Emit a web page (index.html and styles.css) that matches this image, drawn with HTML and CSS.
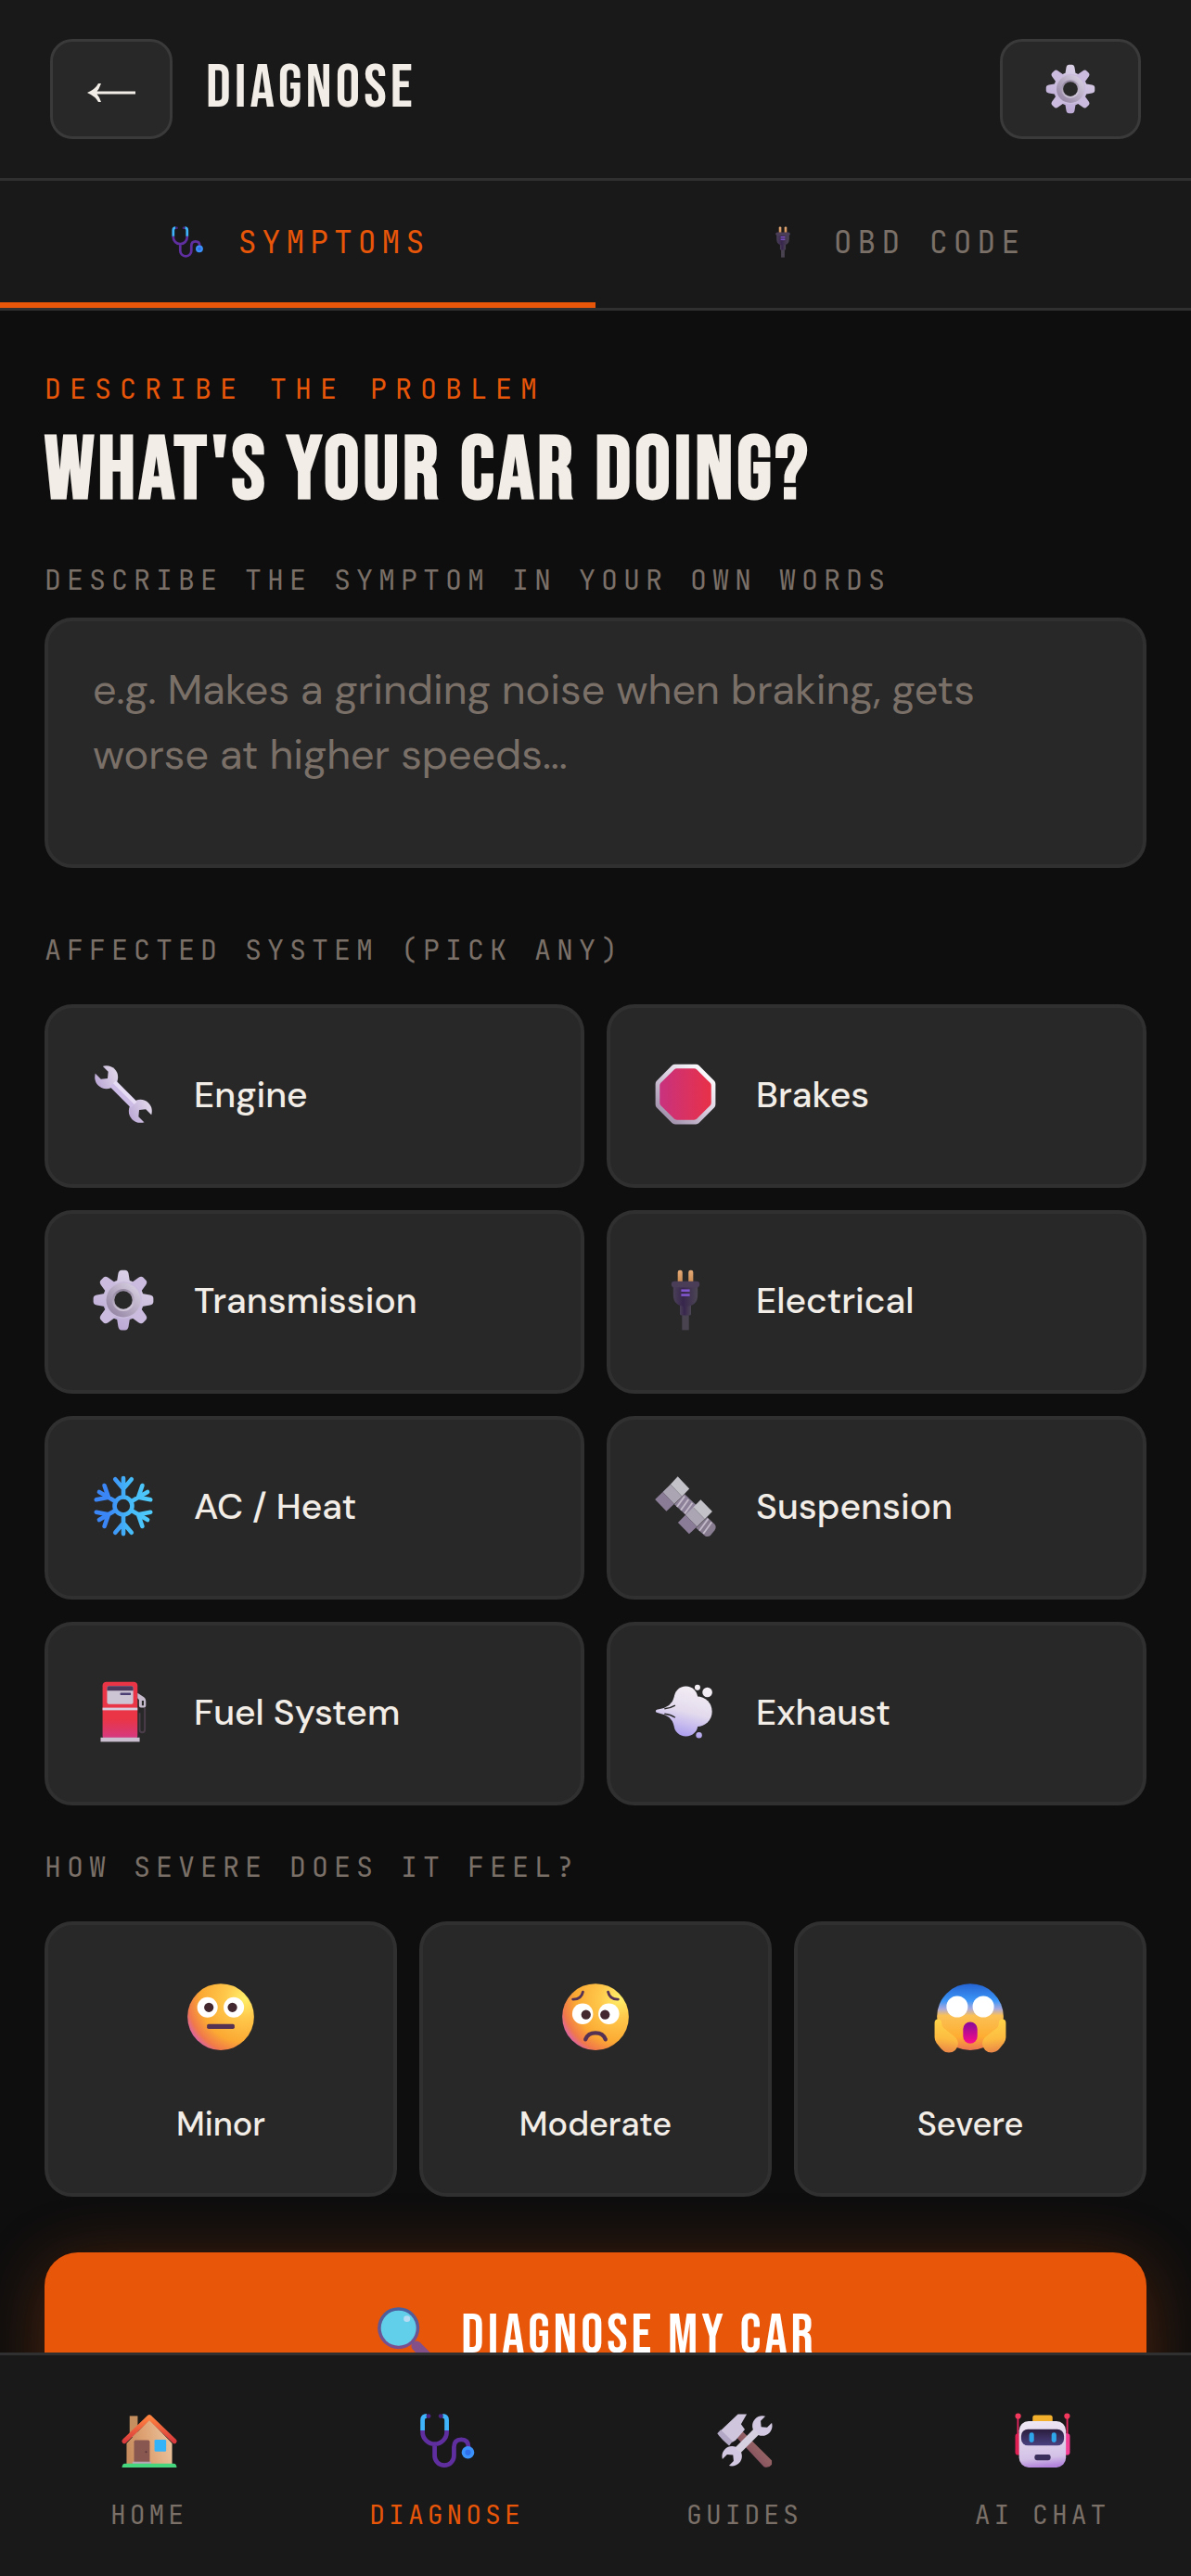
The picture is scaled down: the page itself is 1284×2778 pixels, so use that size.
FILE: index.html
```html
<!DOCTYPE html>
<html lang="en">
  <head>
    <meta charset="UTF-8" />
    <title>Diagnose</title>
    <meta name="viewport" content="width=device-width, initial-scale=1.0" />
    <link rel="stylesheet" href="styles.css">
  </head>
  <body>
    <!-- shared icon shapes and gradients -->
    <svg class="sprite" aria-hidden="true">
      <defs>
        <linearGradient id="metal" x1="0.7" y1="0" x2="0.3" y2="1">
          <stop offset="0" stop-color="#e2d9ea" />
          <stop offset="1" stop-color="#bba7d6" />
        </linearGradient>
        <linearGradient id="metalFlat" gradientUnits="userSpaceOnUse" x1="22" y1="2" x2="10" y2="30">
          <stop offset="0" stop-color="#ddd4e8" />
          <stop offset="1" stop-color="#b9a6d4" />
        </linearGradient>
        <linearGradient id="ring" x1="1" y1="0" x2="0.1" y2="0.9">
          <stop offset="0" stop-color="#e0d8e8" />
          <stop offset="1" stop-color="#9384a3" />
        </linearGradient>
        <linearGradient id="ringInner" x1="0" y1="0" x2="0.3" y2="1">
          <stop offset="0" stop-color="#8b7e98" />
          <stop offset="1" stop-color="#cfc5d8" />
        </linearGradient>
        <linearGradient id="plugBody" x1="0" y1="0" x2="1" y2="0">
          <stop offset="0" stop-color="#4a4057" />
          <stop offset="0.4" stop-color="#38264d" />
          <stop offset="1" stop-color="#4c4654" />
        </linearGradient>
        <linearGradient id="prong" x1="0" y1="0" x2="0" y2="1">
          <stop offset="0" stop-color="#e7ab78" />
          <stop offset="1" stop-color="#c98a4f" />
        </linearGradient>
        <linearGradient id="ice" gradientUnits="userSpaceOnUse" x1="4" y1="0" x2="28" y2="0">
          <stop offset="0.2" stop-color="#3b86f7" />
          <stop offset="0.6" stop-color="#45b9f8" />
          <stop offset="1" stop-color="#4fcbfb" />
        </linearGradient>
        <linearGradient id="signRim" x1="0.9" y1="0.1" x2="0.2" y2="0.9">
          <stop offset="0" stop-color="#ffffff" />
          <stop offset="0.5" stop-color="#d9cfe0" />
          <stop offset="1" stop-color="#a394ae" />
        </linearGradient>
        <linearGradient id="signFace" x1="0" y1="0" x2="1" y2="0">
          <stop offset="0" stop-color="#c8327e" />
          <stop offset="1" stop-color="#e83148" />
        </linearGradient>
        <linearGradient id="pump" x1="0" y1="0" x2="0" y2="1">
          <stop offset="0.65" stop-color="#e93546" />
          <stop offset="1" stop-color="#d33a86" />
        </linearGradient>
        <linearGradient id="smoke" gradientUnits="userSpaceOnUse" x1="20" y1="4" x2="14" y2="28">
          <stop offset="0" stop-color="#f4eef5" />
          <stop offset="0.5" stop-color="#e3dbed" />
          <stop offset="1" stop-color="#a99aef" />
        </linearGradient>
        <radialGradient id="face" cx="0.86" cy="0.22" r="0.95">
          <stop offset="0" stop-color="#fff06a" />
          <stop offset="0.3" stop-color="#ffc94c" />
          <stop offset="0.7" stop-color="#fba933" />
          <stop offset="0.9" stop-color="#f0794a" />
          <stop offset="1" stop-color="#dd659c" />
        </radialGradient>
        <linearGradient id="fright" x1="0" y1="0" x2="0" y2="1">
          <stop offset="0" stop-color="#2463d2" />
          <stop offset="0.26" stop-color="#3d97f8" />
          <stop offset="0.38" stop-color="#a9a9dc" />
          <stop offset="0.48" stop-color="#fbc155" />
          <stop offset="0.8" stop-color="#fdad31" />
          <stop offset="1" stop-color="#ec7452" />
        </linearGradient>
        <linearGradient id="scream" x1="0" y1="0" x2="0" y2="1">
          <stop offset="0" stop-color="#850a9b" />
          <stop offset="1" stop-color="#fb0c88" />
        </linearGradient>
        <linearGradient id="hand" x1="0.6" y1="0" x2="0.5" y2="1">
          <stop offset="0" stop-color="#ffd54a" />
          <stop offset="0.6" stop-color="#fcbb40" />
          <stop offset="1" stop-color="#ea8648" />
        </linearGradient>
        <linearGradient id="roof" x1="0" y1="0" x2="0" y2="1">
          <stop offset="0" stop-color="#ff8440" />
          <stop offset="1" stop-color="#da3a3c" />
        </linearGradient>
        <linearGradient id="wall" x1="0" y1="0.5" x2="1" y2="0.3">
          <stop offset="0" stop-color="#c78d5e" />
          <stop offset="0.4" stop-color="#dea273" />
          <stop offset="1" stop-color="#eac5a0" />
        </linearGradient>
        <linearGradient id="robotHead" x1="0.3" y1="0" x2="0.4" y2="1">
          <stop offset="0" stop-color="#eee7f3" />
          <stop offset="0.8" stop-color="#d3c1e6" />
          <stop offset="1" stop-color="#b284dc" />
        </linearGradient>
        <linearGradient id="visor" x1="0" y1="0" x2="0" y2="1">
          <stop offset="0" stop-color="#2b1d3d" />
          <stop offset="1" stop-color="#4a4180" />
        </linearGradient>
        <linearGradient id="lensRim" x1="0" y1="0" x2="0" y2="1">
          <stop offset="0" stop-color="#47619f" />
          <stop offset="1" stop-color="#7f4d8c" />
        </linearGradient>
        <linearGradient id="handle" x1="1" y1="0" x2="0" y2="1">
          <stop offset="0" stop-color="#ab7a6e" />
          <stop offset="0.5" stop-color="#8f5d62" />
          <stop offset="1" stop-color="#71305f" />
        </linearGradient>
        <mask id="gearHole">
          <rect width="32" height="32" fill="#fff" />
          <circle cx="16" cy="16" r="4.2" fill="#000" />
        </mask>
        <mask id="wrenchJaws" maskUnits="userSpaceOnUse" x="-4" y="0" width="40" height="32">
          <rect x="-4" width="40" height="32" fill="#fff" />
          <path d="M-4 13.6H3.6L5.6 16l-2 2.4H-4zM36 13.6h-7.6L26.4 16l2 2.4H36z" fill="#000" />
        </mask>
      </defs>

      <symbol id="icon-gear" viewBox="0 0 32 32">
        <g mask="url(#gearHole)">
          <g fill="url(#metalFlat)">
            <circle cx="16" cy="16" r="9.6" />
            <path id="teeth" d="M12.8 8.5 13.6 3.6Q13.9 2 15.2 2H16.8Q18.1 2 18.4 3.6L19.2 8.5ZM12.8 23.5 13.6 28.4Q13.9 30 15.2 30H16.8Q18.1 30 18.4 28.4L19.2 23.5ZM8.5 12.8 3.6 13.6Q2 13.9 2 15.2V16.8Q2 18.1 3.6 18.4L8.5 19.2ZM23.5 12.8 28.4 13.6Q30 13.9 30 15.2V16.8Q30 18.1 28.4 18.4L23.5 19.2Z" />
          </g>
          <use href="#teeth" fill="#cabbdf" transform="rotate(45 16 16)" />
          <circle cx="16" cy="16" r="8.6" fill="#c9bcdc" />
          <circle cx="16" cy="16" r="8" fill="url(#ring)" />
          <circle cx="16" cy="16" r="5.2" fill="url(#ringInner)" />
        </g>
      </symbol>

      <symbol id="icon-plug" viewBox="0 0 32 32">
        <rect x="12.4" y="2" width="2.2" height="6" rx="1" fill="url(#prong)" />
        <rect x="17.4" y="2" width="2.2" height="6" rx="1" fill="url(#prong)" />
        <rect x="14.4" y="22" width="3.2" height="8" fill="#494350" />
        <rect x="13.4" y="17.5" width="5.2" height="5.6" rx="0.6" fill="url(#plugBody)" />
        <path d="M10.3 9.5h11.4v4q0 5.4-5.7 5.4t-5.7-5.4z" fill="url(#plugBody)" />
        <rect x="9.4" y="7.2" width="13.2" height="3" rx="1.5" fill="#493d58" />
        <rect x="14" y="11" width="4" height="1.1" fill="#8156cf" />
        <rect x="14" y="13.1" width="4" height="1.1" fill="#8156cf" />
      </symbol>

      <symbol id="icon-scope" viewBox="0 0 32 32">
        <g fill="none" stroke-width="2.3">
          <path d="M3.2 10.5V11.5a6.3 6.3 0 0 0 12.6 0V10.5M9.5 18v5.9a5 5 0 0 0 10.1 0V19.5q0-4 3.8-4t3.8 4" stroke="#5f2fa0" />
          <path d="M3.2 10.7V5.2Q3.2 3.1 5.3 3.1M15.8 10.7V5.2Q15.8 3.1 13.7 3.1" stroke="#3fb4fb" />
        </g>
        <circle cx="6.3" cy="3.2" r="1.2" fill="#4b2280" />
        <circle cx="12.7" cy="3.2" r="1.2" fill="#4b2280" />
        <circle cx="26.9" cy="22.2" r="3.3" fill="#3b92fb" />
        <circle cx="26.9" cy="22.2" r="1.5" fill="#2f6fea" />
      </symbol>

      <symbol id="icon-wrench" viewBox="0 0 32 32">
        <g transform="rotate(45 16 16)">
          <g mask="url(#wrenchJaws)" fill="url(#metal)">
            <circle cx="4.8" cy="16" r="5.4" />
            <circle cx="27.2" cy="16" r="5.4" />
          </g>
          <path d="M9 14h14v4H9z" fill="#cdbce6" />
          <path d="M9 14h14v1.8H9z" fill="#e6dcf3" />
        </g>
      </symbol>
    </svg>

    <div class="app">
      <header class="header">
        <button type="button" class="header-btn" aria-label="Back">
          <svg class="arrow" viewBox="0 0 52 20">
            <path d="M9 8.5H52v3H9zM0 10Q9 6 12 0h3Q13 6 9.5 10 13 14 15 20H12Q9 14 0 10z" />
          </svg>
        </button>
        <h1 class="header-title">DIAGNOSE</h1>
        <button type="button" class="header-btn settings" aria-label="Settings">
          <svg class="icon-60"><use href="#icon-gear" /></svg>
        </button>
      </header>

      <div class="tabs" role="tablist">
        <button type="button" class="tab active" role="tab" aria-selected="true">
          <svg class="icon-38"><use href="#icon-scope" /></svg>
          SYMPTOMS
        </button>
        <button type="button" class="tab" role="tab" aria-selected="false">
          <svg class="icon-38"><use href="#icon-plug" /></svg>
          OBD CODE
        </button>
      </div>

      <main class="content">
        <p class="eyebrow">DESCRIBE THE PROBLEM</p>
        <h2 class="title">WHAT'S YOUR CAR DOING?</h2>

        <label class="label" for="symptom">DESCRIBE THE SYMPTOM IN YOUR OWN WORDS</label>
        <textarea class="symptom-input" id="symptom" placeholder="e.g. Makes a grinding noise when braking, gets worse at higher speeds..."></textarea>

        <p class="label" id="systemLabel">AFFECTED SYSTEM (PICK ANY)</p>
        <div class="system-grid" role="group" aria-labelledby="systemLabel">
          <button type="button" class="card system">
            <svg class="icon-74"><use href="#icon-wrench" /></svg>
            Engine
          </button>
          <button type="button" class="card system">
            <svg class="icon-74" viewBox="0 0 32 32">
              <path d="M11.2 2h9.6q.9 0 1.5.6l7.1 7.1q.6.6.6 1.5v9.6q0 .9-.6 1.5l-7.1 7.1q-.6.6-1.5.6h-9.6q-.9 0-1.5-.6l-7.1-7.1Q2 21.7 2 20.8v-9.6q0-.9.6-1.5l7.1-7.1q.6-.6 1.5-.6z" fill="url(#signRim)" />
              <path d="M12 4h8q.8 0 1.3.5l6.2 6.2q.5.5.5 1.3v8q0 .8-.5 1.3l-6.2 6.2q-.5.5-1.3.5h-8q-.8 0-1.3-.5l-6.2-6.2Q4 20.8 4 20v-8q0-.8.5-1.3l6.2-6.2Q11.2 4 12 4z" fill="url(#signFace)" />
            </svg>
            Brakes
          </button>
          <button type="button" class="card system">
            <svg class="icon-74"><use href="#icon-gear" /></svg>
            Transmission
          </button>
          <button type="button" class="card system">
            <svg class="icon-74"><use href="#icon-plug" /></svg>
            Electrical
          </button>
          <button type="button" class="card system">
            <svg class="icon-74" viewBox="0 0 32 32" fill="none" stroke="url(#ice)" stroke-width="2" stroke-linecap="round" stroke-linejoin="round">
              <circle cx="16" cy="16" r="4.1" />
              <path d="M16 11.8V3M12.2 3.6L16 8l3.8-4.4M16 20.2V29M12.2 28.4L16 24l3.8 4.4M19.64 13.9L27.26 9.5M28.64 13.09L22.93 12L24.84 6.51M19.64 18.1L27.26 22.5M28.64 18.91L22.93 20L24.84 25.49M12.36 13.9L4.74 9.5M3.36 13.09L9.07 12L7.16 6.51M12.36 18.1L4.74 22.5M3.36 18.91L9.07 20L7.16 25.49" />
            </svg>
            AC / Heat
          </button>
          <button type="button" class="card system">
            <svg class="icon-74" viewBox="0 0 32 32">
              <path d="M15.6 10.5 21.2 15.8 16.5 20.5 10.8 15.2z" fill="#8d8199" />
              <path d="M15.6 11.5 12 16.4M17.4 13 13.8 18M19.2 14.6 15.6 19.6" stroke="#c3bac9" stroke-width="0.8" />
              <path d="M26.2 21.3 29.7 24.6Q30.6 25.9 29.6 27.4L27.7 29.7Q26.5 30.7 25.2 30L20.9 26.3z" fill="#877c90" />
              <path d="M26.6 22 22.5 27.6M28.2 23.6 24.3 29" stroke="#c3bac9" stroke-width="0.8" />
              <path d="M12.4 2.3 17.8 8 14.4 11.6 9 5.9z" fill="#c4c2c9" />
              <path d="M9 5.9 14.4 11.6 10.7 15.1 5.4 9.5z" fill="#aaa4b3" />
              <path d="M5.4 9.5 10.7 15.1 7.1 18.5 1.8 13z" fill="#8a7c96" />
              <path d="M23.1 13.1 28.5 18.6 25 22.2 19.6 16.7z" fill="#c4c2c9" />
              <path d="M19.6 16.7 25 22.2 21.3 25.7 16 20.2z" fill="#aaa4b3" />
              <path d="M16 20.2 21.3 25.7 17.7 29.1 12.5 23.8z" fill="#8a7c96" />
            </svg>
            Suspension
          </button>
          <button type="button" class="card system">
            <svg class="icon-74" viewBox="0 0 32 32">
              <path d="M23.6 16.5V24.3q0 1.300 1.200 1.300t1.200-1.300V14" fill="none" stroke="#4c3d4b" stroke-width="0.8" />
              <rect x="6.3" y="2" width="16.3" height="27" rx="1.8" fill="url(#pump)" />
              <rect x="8.4" y="4" width="12.2" height="8.4" rx="0.8" fill="#cdc5d3" />
              <path d="M8.4 6.2V4.8q0-.8.8-.8h10.6q.8 0 .8.8v1.4z" fill="#4b3a5c" />
              <rect x="14.5" y="7.1" width="5" height="1.1" rx="0.3" fill="#4b3f74" />
              <rect x="6.3" y="14.1" width="16.3" height="1.2" fill="#d8cede" />
              <rect x="5.4" y="28" width="18.2" height="2" fill="#c9bfd0" />
              <path fill-rule="evenodd" d="M22.6 7.2 25.6 9.2q.9.7.9 1.8v2.2q0 .9-.9.9h-1.4q-.9 0-.9-.9V10.4l-.7-.8zM24.6 10.8v2.3h.9v-2.3z" fill="#c6bccd" />
            </svg>
            Fuel System
          </button>
          <button type="button" class="card system">
            <svg class="icon-74" viewBox="0 0 32 32">
              <g fill="url(#smoke)">
                <circle cx="16.2" cy="9.6" r="5.5" />
                <circle cx="21.4" cy="15.9" r="7" />
                <circle cx="16.2" cy="21.9" r="5.6" />
                <path d="M2.1 15.7q0-.8 1.5-.9Q9.5 14 10.8 9L18 8.5V23.5L10.7 22.5Q9.5 17.5 3.6 16.6 2.1 16.5 2.1 15.7z" />
                <circle cx="21.6" cy="4.7" r="1.3" />
                <circle cx="26.2" cy="6.9" r="2.3" />
                <circle cx="22.3" cy="26.9" r="1.4" />
              </g>
              <path d="M6.2 14.6Q9 14.3 11.2 13M6.2 17Q9 17.2 11.2 18.7" fill="none" stroke="#282828" stroke-width="0.6" />
            </svg>
            Exhaust
          </button>
        </div>

        <p class="label severity-label" id="severityLabel">HOW SEVERE DOES IT FEEL?</p>
        <div class="severity-grid" role="group" aria-labelledby="severityLabel">
          <button type="button" class="card severity">
            <svg class="icon-82" viewBox="0 0 32 32">
              <circle cx="16" cy="16" r="14" fill="url(#face)" />
              <g fill="#fff">
                <circle cx="10.4" cy="12" r="4.3" />
                <circle cx="21.5" cy="12" r="4.3" />
              </g>
              <g fill="#43282f">
                <circle cx="11" cy="12" r="2" />
                <circle cx="20.9" cy="12" r="2" />
              </g>
              <rect x="10.2" y="19" width="11.6" height="2.1" rx="0.7" fill="#553154" />
            </svg>
            Minor
          </button>
          <button type="button" class="card severity">
            <svg class="icon-82" viewBox="0 0 32 32">
              <circle cx="16" cy="16" r="14" fill="url(#face)" />
              <g fill="#fff">
                <circle cx="10.6" cy="14.7" r="4.4" />
                <circle cx="21.6" cy="14.7" r="4.4" />
              </g>
              <g fill="#43282f">
                <circle cx="12" cy="15.1" r="2" />
                <circle cx="20" cy="15.1" r="2" />
              </g>
              <g fill="none" stroke="#553154" stroke-linecap="round">
                <path d="M6.5 8.6Q10 8.7 10.7 5.5M25.5 8.6Q22 8.7 21.3 5.5" stroke-width="1.1" />
                <path d="M11.8 25.5Q12.8 22.8 16 22.8T20.2 25.5" stroke-width="1.7" />
              </g>
            </svg>
            Moderate
          </button>
          <button type="button" class="card severity">
            <svg class="icon-82" viewBox="0 0 32 32">
              <circle cx="16" cy="16" r="14" fill="url(#fright)" />
              <g fill="#fff">
                <circle cx="10.5" cy="11.7" r="4.5" />
                <circle cx="21.5" cy="11.7" r="4.5" />
              </g>
              <rect x="13" y="18.1" width="6" height="9.1" rx="3" fill="url(#scream)" />
              <path id="palm" d="M1 18.6Q1 17 2.5 17T4 19Q4 20.3 5.5 21.3L9 24Q11 25.5 10.9 27.5 10.3 31 7 31 5 31 3.6 29.3L1.8 27Q1 25.9 1 24.6z" fill="url(#hand)" />
              <use href="#palm" transform="translate(32 0) scale(-1 1)" />
            </svg>
            Severe
          </button>
        </div>

        <button type="button" class="diagnose-btn">
          <svg class="icon-70" viewBox="0 0 32 32">
            <path d="M21 21 28 28" stroke="#83508a" stroke-width="5" stroke-linecap="round" />
            <circle cx="12.2" cy="12.2" r="10.3" fill="url(#lensRim)" />
            <circle cx="12.2" cy="12.2" r="8.7" fill="#62cfea" />
            <ellipse cx="16.3" cy="7.6" rx="1.6" ry="1.5" fill="#b5dcf2" />
          </svg>
          DIAGNOSE MY CAR
        </button>
      </main>

      <nav class="nav">
        <a class="nav-item" href="#">
          <svg class="icon-66" viewBox="0 0 32 32">
            <rect x="5.7" y="3.1" width="4.2" height="11" fill="#c58f5f" />
            <path d="M16 5 27.9 17.5V28.5H4.1V17.5z" fill="url(#wall)" />
            <rect x="8" y="15.8" width="8.2" height="12.2" rx="0.8" fill="#875750" />
            <circle cx="14.3" cy="21.9" r="0.5" fill="#5a3438" />
            <rect x="7.2" y="27" width="9.8" height="1.2" fill="#b9a6b5" />
            <rect x="18.7" y="15.5" width="6.1" height="6.2" rx="0.6" fill="#35b3f8" />
            <path d="M2.9 16.3 16 3.7 29.1 16.3" fill="none" stroke="url(#roof)" stroke-width="2.5" stroke-linecap="round" stroke-linejoin="round" />
            <path d="M1.7 30q.2-2 1.5-2h25.6q1.3 0 1.5 2z" fill="#46d67d" />
          </svg>
          HOME
        </a>
        <a class="nav-item active" href="#" aria-current="page">
          <svg class="icon-66"><use href="#icon-scope" /></svg>
          DIAGNOSE
        </a>
        <a class="nav-item" href="#">
          <svg class="icon-66" viewBox="0 0 32 32">
            <path d="M13.8 10.2 30.1 26.4V28.5Q28.5 30.6 26 29.7L10.8 13.5z" fill="url(#handle)" />
            <path d="M12.4 2.2H17L14 7.4 16 10.2 11.2 15.8 9.5 16.8 3.2 10.9z" fill="#cfc6de" />
            <path d="M3.4 10.3 9.6 16.4 7.8 18.7Q3.6 15.2 1.6 12.3z" fill="#b3a9c6" />
            <g transform="translate(33.2 0.2) scale(-1 1)">
              <g transform="rotate(45 16 16)">
                <g mask="url(#wrenchJaws)" fill="#d3c8e2">
                  <circle cx="4.8" cy="16" r="5.2" />
                  <circle cx="27.2" cy="16" r="5.2" />
                </g>
                <path d="M9 14h14v4H9z" fill="#d6cfe0" />
              </g>
            </g>
          </svg>
          GUIDES
        </a>
        <a class="nav-item" href="#">
          <svg class="icon-66" viewBox="0 0 32 32">
            <path d="M3.1 3.5V14M28.9 3.5V14" stroke="#e3265f" stroke-width="0.9" />
            <circle cx="3.2" cy="3.2" r="1.5" fill="#f2385c" />
            <circle cx="28.8" cy="3.2" r="1.5" fill="#f2385c" />
            <rect x="1.7" y="12.3" width="4" height="11.2" rx="1.5" fill="#de1f52" />
            <rect x="26.3" y="12.3" width="4" height="11.2" rx="1.5" fill="#f43c92" />
            <rect x="10.8" y="2.7" width="10.4" height="4" rx="1.3" fill="#f3b02c" />
            <rect x="3.7" y="5.8" width="24.5" height="24.2" rx="5" fill="url(#robotHead)" />
            <rect x="4.8" y="10" width="22.4" height="8.6" rx="3.6" fill="url(#visor)" />
            <rect x="9" y="11.8" width="2.5" height="5.2" rx="1.2" fill="#2fa6ea" />
            <rect x="20.7" y="11.8" width="2.5" height="5.2" rx="1.2" fill="#2fa6ea" />
            <rect x="11.8" y="23.3" width="8.4" height="3" rx="1.2" fill="#3b2f5c" />
          </svg>
          AI CHAT
        </a>
      </nav>
    </div>
  </body>
</html>
```
FILE: styles.css
```css
* {
  box-sizing: border-box;
  margin: 0;
  padding: 0;
}

:root {
  --bg: #0e0e0e;
  --bar: #191919;
  --card: #282828;
  --line: #303030;
  --line-strong: #3a3a3a;
  --accent: #e85609;
  --text: #f2ede6;
  --muted: #7a7068;
  --display: "Bebas Neue", "Liberation Sans Narrow", "DejaVu Sans Condensed", sans-serif;
  --mono: "JetBrains Mono", "DejaVu Sans Mono", monospace;
  --sans: "DM Sans", "Open Sans", sans-serif;
}

body {
  background: var(--bg);
  color: var(--text);
  font-family: var(--sans);
}

button,
textarea {
  font-family: inherit;
  color: inherit;
}

button {
  cursor: pointer;
}

svg {
  flex-shrink: 0;
}

.sprite {
  position: absolute;
  width: 0;
  height: 0;
}

.app {
  display: flex;
  flex-direction: column;
  height: 100vh;
}

/* header */
.header {
  display: flex;
  align-items: center;
  gap: 36px;
  padding: 42px 54px;
  background: var(--bar);
  border-bottom: 3px solid var(--line);
}

.header-btn {
  display: flex;
  align-items: center;
  justify-content: center;
  width: 132px;
  height: 108px;
  background: var(--card);
  border: 3px solid var(--line-strong);
  border-radius: 24px;
}

.header-btn.settings {
  width: 152px;
  margin-left: auto;
}

.header-title {
  font-family: var(--display);
  font-size: 66px;
  font-weight: 400;
  line-height: 80px;
  letter-spacing: 4px;
}

.arrow {
  width: 52px;
  height: 20px;
  margin-top: 8px;
  fill: var(--text);
}

.icon-38 {
  width: 38px;
  height: 38px;
}

.icon-60 {
  width: 60px;
  height: 60px;
}

.icon-66 {
  width: 66px;
  height: 66px;
}

.icon-70 {
  width: 70px;
  height: 70px;
}

.icon-74 {
  width: 74px;
  height: 74px;
}

.icon-82 {
  width: 82px;
  height: 82px;
}

/* tabs */
.tabs {
  display: flex;
  background: var(--bar);
  border-bottom: 3px solid var(--line);
}

.tab {
  flex: 1;
  display: flex;
  align-items: center;
  justify-content: center;
  gap: 36px;
  padding: 43px 0 42px 4px;
  background: none;
  border: none;
  border-bottom: 6px solid transparent;
  color: var(--muted);
  font-family: var(--mono);
  font-size: 33px;
  line-height: 46px;
  letter-spacing: 6px;
}

.tab.active {
  color: var(--accent);
  border-bottom-color: var(--accent);
}

/* content */
.content {
  flex: 1;
  min-height: 0;
  overflow-y: auto;
  scrollbar-width: none;
  padding: 64px 48px;
}

.eyebrow {
  margin-bottom: 22px;
  color: var(--accent);
  font-family: var(--mono);
  font-size: 30px;
  line-height: 40px;
  letter-spacing: 9px;
}

.title {
  margin-bottom: 48px;
  font-family: var(--display);
  font-size: 96px;
  line-height: 96px;
  letter-spacing: 4px;
}

.label {
  display: block;
  color: var(--muted);
  font-family: var(--mono);
  font-size: 30px;
  line-height: 40px;
  letter-spacing: 6px;
}

.symptom-input {
  display: block;
  width: 100%;
  height: 270px;
  margin: 21px 0 68px;
  padding: 39px 48px;
  background: var(--card);
  border: 4px solid var(--line);
  border-radius: 30px;
  font-size: 45px;
  line-height: 70px;
  resize: none;
}

.symptom-input::placeholder {
  color: var(--muted);
}

.card {
  background: var(--card);
  border: 4px solid var(--line);
  border-radius: 30px;
  font-weight: 500;
}

.system-grid {
  display: grid;
  grid-template-columns: 1fr 1fr;
  gap: 24px;
  margin-top: 39px;
}

.system {
  display: flex;
  align-items: center;
  gap: 39px;
  height: 198px;
  padding: 0 44px 4px;
  font-size: 39px;
}

.severity-label {
  margin-top: 46px;
}

.severity-grid {
  display: grid;
  grid-template-columns: repeat(3, 1fr);
  gap: 24px;
  margin-top: 39px;
}

.severity {
  display: flex;
  flex-direction: column;
  align-items: center;
  gap: 50px;
  padding: 58px 0 49px;
  font-size: 36px;
  line-height: 50px;
}

.diagnose-btn {
  display: flex;
  align-items: center;
  justify-content: center;
  gap: 24px;
  width: 100%;
  height: 180px;
  margin-top: 60px;
  background: var(--accent);
  border: none;
  border-radius: 36px;
  box-shadow: 0 12px 72px rgba(232, 86, 9, 0.3);
  color: #fff;
  font-family: var(--display);
  font-size: 60px;
  letter-spacing: 4px;
}

/* bottom navigation */
.nav {
  display: flex;
  background: var(--bar);
  border-top: 3px solid var(--line);
}

.nav-item {
  flex: 1;
  display: flex;
  flex-direction: column;
  align-items: center;
  gap: 27px;
  padding: 59px 0 46px;
  color: var(--muted);
  font-family: var(--mono);
  font-size: 28px;
  line-height: 40px;
  letter-spacing: 4px;
  text-decoration: none;
}

.nav-item.active {
  color: var(--accent);
}
```
